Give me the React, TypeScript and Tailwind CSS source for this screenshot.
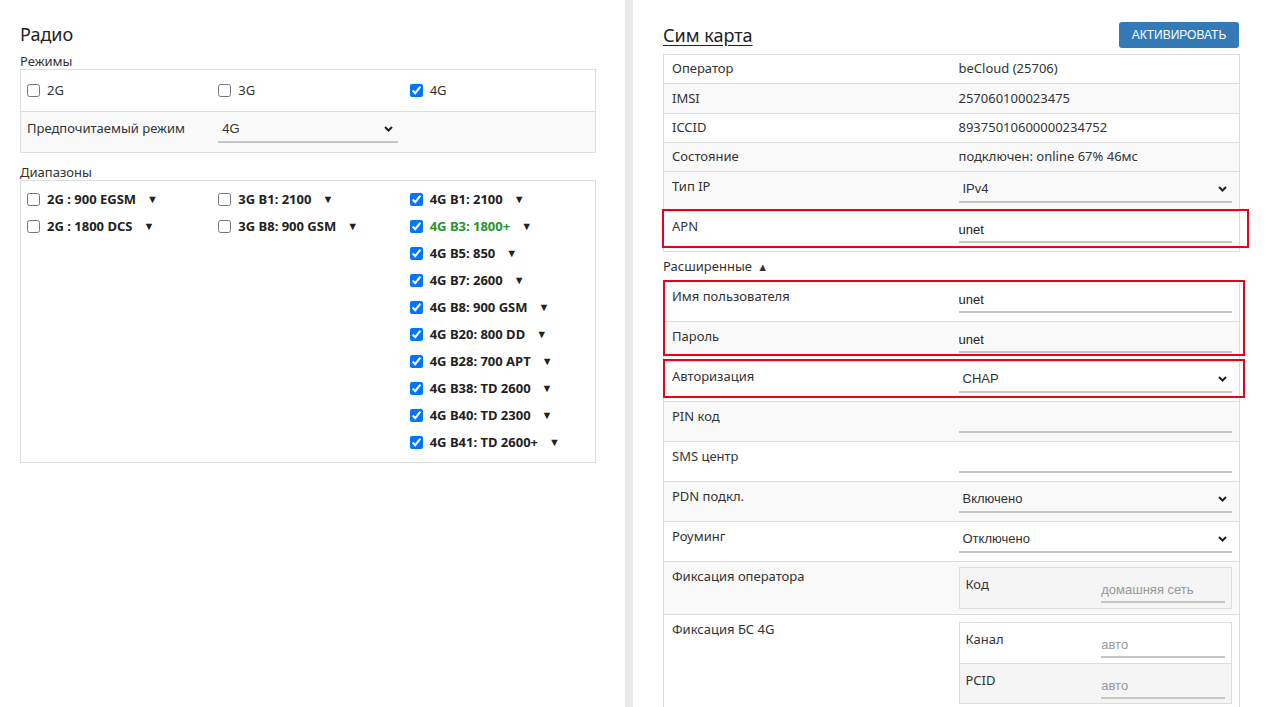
import React from "react";

type Band = { label: string; checked: boolean; accent?: boolean };

const bands2G: Band[] = [
  { label: "2G : 900 EGSM", checked: false },
  { label: "2G : 1800 DCS", checked: false },
];

const bands3G: Band[] = [
  { label: "3G B1: 2100", checked: false },
  { label: "3G B8: 900 GSM", checked: false },
];

const bands4G: Band[] = [
  { label: "4G B1: 2100", checked: true },
  { label: "4G B3: 1800+", checked: true, accent: true },
  { label: "4G B5: 850", checked: true },
  { label: "4G B7: 2600", checked: true },
  { label: "4G B8: 900 GSM", checked: true },
  { label: "4G B20: 800 DD", checked: true },
  { label: "4G B28: 700 APT", checked: true },
  { label: "4G B38: TD 2600", checked: true },
  { label: "4G B40: TD 2300", checked: true },
  { label: "4G B41: TD 2600+", checked: true },
];

function Chevron() {
  return (
    <svg width="9" height="6" viewBox="0 0 9 6" className="shrink-0">
      <path d="M1 1l3.5 3.5L8 1" fill="none" stroke="#222" strokeWidth="2" />
    </svg>
  );
}

function SelectBox({ value }: { value: string }) {
  return (
    <div className="mt-[5px] flex h-[26px] items-center justify-between border-b-2 border-[#c6c6c6] pl-[4px] pr-[5px] font-['Liberation_Sans',Arial,sans-serif] text-[13px] text-[#333]">
      <span>{value}</span>
      <Chevron />
    </div>
  );
}

function TextInput({ value, placeholder, className = "mt-[5px]" }: { value?: string; placeholder?: string; className?: string }) {
  return (
    <input
      readOnly
      defaultValue={value}
      placeholder={placeholder}
      className={`${className} block h-[26px] w-full border-b-2 border-[#c6c6c6] bg-transparent font-['Liberation_Sans',Arial,sans-serif] text-[13px] text-[#222] outline-none placeholder:text-[#999]`}
    />
  );
}

function BandItem({ band }: { band: Band }) {
  return (
    <div className="flex h-[27px] items-center gap-[7px]">
      <input type="checkbox" defaultChecked={band.checked} className="h-[13px] w-[13px] shrink-0" />
      <span className={`text-[13px] font-bold ${band.accent ? "text-[#27962c]" : "text-[#222]"}`}>{band.label}</span>
      <span className="ml-[4px] text-[11px] text-[#222]">▼</span>
    </div>
  );
}

function InfoRow({ label, value, shaded }: { label: string; value: string; shaded?: boolean }) {
  return (
    <div className={`grid h-[29.3px] grid-cols-2 items-center border-t border-[#ddd] ${shaded ? "bg-[#f9f9f9]" : "bg-white"}`}>
      <div className="px-2">{label}</div>
      <div className="px-[7px]">{value}</div>
    </div>
  );
}

function FieldRow({ label, shaded, height = "h-[40px]", children }: { label: string; shaded?: boolean; height?: string; children: React.ReactNode }) {
  return (
    <div className={`grid ${height} grid-cols-2 border-t border-[#ddd] ${shaded ? "bg-[#f9f9f9]" : "bg-white"}`}>
      <div className="px-2 pt-[5px] leading-[18px]">{label}</div>
      <div className="px-[7px]">{children}</div>
    </div>
  );
}

function NestedRow({ label, placeholder, shaded, first }: { label: string; placeholder: string; shaded?: boolean; first?: boolean }) {
  return (
    <div className={`grid h-[40px] grid-cols-2 ${first ? "" : "border-t border-[#ddd]"} ${shaded ? "bg-[#f5f5f5]" : ""}`}>
      <div className="px-[6px] pt-[7px] leading-[18px]">{label}</div>
      <div className="px-[6px]">
        <TextInput placeholder={placeholder} className="mt-[9px]" />
      </div>
    </div>
  );
}

function Marker({ className }: { className: string }) {
  return <span className={`pointer-events-none absolute border-2 border-[#e3061a] ${className}`} />;
}

export default function App() {
  return (
    <div className="flex h-[707px] overflow-hidden bg-white font-['Noto_Sans',sans-serif] text-[13px] text-[#333]">
      {/* radio settings */}
      <section className="w-[625px] shrink-0 pl-[20px] pr-[29px] pt-[22px]">
        <h2 className="text-[18px] leading-[24px] text-[#222]">Радио</h2>
        <div className="mt-[8px] leading-[15px]">Режимы</div>
        <div className="border border-[#ddd]">
          <div className="grid h-[41px] grid-cols-3 items-center">
            {[
              ["2G", false],
              ["3G", false],
              ["4G", true],
            ].map(([name, on]) => (
              <label key={name as string} className="flex items-center gap-[7px] pl-[6px]">
                <input type="checkbox" defaultChecked={on as boolean} className="h-[13px] w-[13px]" />
                <span>{name}</span>
              </label>
            ))}
          </div>
          <div className="grid h-[41px] grid-cols-3 border-t border-[#ddd] bg-[#f9f9f9]">
            <div className="pl-[6px] pt-[7px] leading-[18px]">Предпочитаемый режим</div>
            <div className="px-[6px]">
              <SelectBox value="4G" />
            </div>
          </div>
        </div>

        <div className="mt-[12px] leading-[15px]">Диапазоны</div>
        <div className="grid grid-cols-3 border border-[#ddd] pb-[6px] pt-[5px]">
          {[bands2G, bands3G, bands4G].map((col, i) => (
            <div key={i} className="pl-[6px]">
              {col.map((b) => (
                <BandItem key={b.label} band={b} />
              ))}
            </div>
          ))}
        </div>
      </section>

      <div className="w-[8px] shrink-0 bg-[#eaeaea]" />

      {/* SIM card settings */}
      <section className="ml-[30px] w-[577px] shrink-0 pt-[22px]">
        <div className="flex h-[26px] items-center justify-between">
          <h2 className="text-[18px] leading-[24px] text-[#222] underline underline-offset-[3px]">Сим карта</h2>
          <button className="mr-[1px] h-[26px] w-[120px] rounded-[3px] bg-[#337ab7] font-['Liberation_Sans',Arial,sans-serif] text-[12px] text-white">
            АКТИВИРОВАТЬ
          </button>
        </div>

        <div className="mt-[6px] border-x border-b border-[#ddd]">
          <InfoRow label="Оператор" value="beCloud (25706)" />
          <InfoRow label="IMSI" value="257060100023475" shaded />
          <InfoRow label="ICCID" value="89375010600000234752" />
          <InfoRow label="Состояние" value="подключен: online 67% 46мс" shaded />
          <FieldRow label="Тип IP" shaded>
            <SelectBox value="IPv4" />
          </FieldRow>
          <div className="relative">
            <FieldRow label="APN">
              <TextInput value="unet" />
            </FieldRow>
            <Marker className="-left-[2px] -right-[10px] -top-[2px] h-[39px]" />
          </div>
        </div>

        <div className="py-[5px] leading-[18px]">
          Расширенные <span className="ml-[2px] text-[11px]">▲</span>
        </div>

        <div className="border-x border-b border-[#ddd]">
          <div className="relative">
            <FieldRow label="Имя пользователя">
              <TextInput value="unet" />
            </FieldRow>
            <FieldRow label="Пароль" shaded>
              <TextInput value="unet" />
            </FieldRow>
            <Marker className="-left-[1px] -right-[6px] -top-[1px] h-[76px]" />
          </div>
          <div className="relative">
            <FieldRow label="Авторизация">
              <SelectBox value="CHAP" />
            </FieldRow>
            <Marker className="-left-[1px] -right-[6px] -top-[2px] h-[39px]" />
          </div>
          <FieldRow label="PIN код" shaded>
            <TextInput />
          </FieldRow>
          <FieldRow label="SMS центр">
            <TextInput />
          </FieldRow>
          <FieldRow label="PDN подкл." shaded>
            <SelectBox value="Включено" />
          </FieldRow>
          <FieldRow label="Роуминг">
            <SelectBox value="Отключено" />
          </FieldRow>
          <FieldRow label="Фиксация оператора" shaded height="h-[53px]">
            <div className="mt-[5px] border border-[#ddd]">
              <NestedRow label="Код" placeholder="домашняя сеть" first shaded />
            </div>
          </FieldRow>
          <FieldRow label="Фиксация БС 4G" height="h-[120px]">
            <div className="mt-[7px] border border-[#ddd]">
              <NestedRow label="Канал" placeholder="авто" first />
              <NestedRow label="PCID" placeholder="авто" shaded />
            </div>
          </FieldRow>
        </div>
      </section>
    </div>
  );
}
